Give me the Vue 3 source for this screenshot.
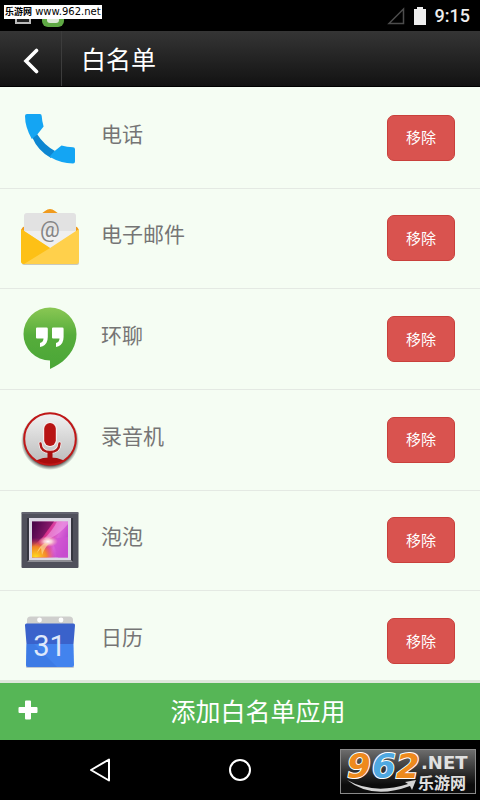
<template>
  <div class="screen">
    <div class="status-bar">
      <div class="notifications">
        <svg width="16" height="18" viewBox="0 0 16 18">
          <rect x="1" y="4" width="14" height="12" fill="#222" stroke="#bbb" stroke-width="2" />
        </svg>
        <svg width="22" height="22" viewBox="0 0 22 22">
          <rect width="22" height="22" rx="6" fill="#5fa944" />
          <rect x="5" y="3" width="12" height="15" rx="3" fill="#dce8d6" />
        </svg>
      </div>
      <div class="system">
        <svg class="signal" width="18" height="18" viewBox="0 0 18 18">
          <path d="M2 16.5H16.5V2Z" fill="none" stroke="#4c4c4c" stroke-width="1.5" />
        </svg>
        <svg class="battery" width="12" height="18" viewBox="0 0 12 18">
          <path d="M3 0H9V2H12V18H0V2H3Z" fill="#eee" />
        </svg>
        <span class="clock">9:15</span>
      </div>
      <div class="site-tag"><span class="site-name">乐游网</span> www.962.net</div>
    </div>

    <header class="header">
      <button type="button" class="back-btn" aria-label="返回">
        <svg width="16" height="26" viewBox="0 0 16 26">
          <path d="M13.5 2.5L3 13L13.5 23.5" fill="none" stroke="#fff" stroke-width="3.6" stroke-linecap="round" />
        </svg>
      </button>
      <h1>白名单</h1>
    </header>

    <main class="content">
      <ul class="app-list">
        <li v-for="app in apps" :key="app.id" class="app-row">
          <svg class="app-icon" viewBox="0 0 60 60">
            <g v-if="app.id === 'phone'">
              <path d="M12 29L17 26Q24 37 35 43L31 50Q18 43 12 29Z" fill="#0d86d1" />
              <path d="M7 6H20Q21.6 6 21.7 8Q22 13 23.6 18.5L17.3 26.5L11.8 31Q5 19 5 8Q5 6 7 6Z" fill="#14a5f3" />
              <path d="M34 43.5L41.5 37.5Q47 39.2 53 39.3Q55 39.4 55 41.3V53.5Q55 55.5 53 55.5Q41 55.5 29.5 48.8Z" fill="#14a5f3" />
            </g>
            <g v-else-if="app.id === 'email'">
              <rect x="2" y="53" width="57" height="4" rx="2" fill="#c9c9bd" />
              <path d="M1 22Q2 19 5 18L25 3Q30 -1 35 3L55 18Q58 19 59 22V40H1Z" fill="#f09a1d" />
              <path d="M4 8Q4 5 7 5H53Q56 5 56 8V42H4Z" fill="#e2e2e2" />
              <path d="M4 23H56V42H4Z" fill="#efefef" />
              <text x="30" y="29" class="at-sign">@</text>
              <path d="M1 21L30 40L59 21V53Q59 56 56 56H4Q1 56 1 53Z" fill="#ffd04b" />
              <path d="M1 21L30 40L4 56Q1 56 1 53Z" fill="#fdc016" />
            </g>
            <g v-else-if="app.id === 'hangouts'">
              <defs>
                <linearGradient id="hangouts-fill" x1="0" y1="0" x2="0" y2="1">
                  <stop offset="0" stop-color="#8ac754" />
                  <stop offset="0.45" stop-color="#56ad3b" />
                  <stop offset="1" stop-color="#4aa637" />
                </linearGradient>
              </defs>
              <path d="M30 -1.5A26.5 26.5 0 0 1 56.5 25C56.5 42 44 54 30 60V51.5A26.5 26.5 0 0 1 30 -1.5Z" fill="url(#hangouts-fill)" />
              <path
                d="M17 18.5H26.5Q27.8 18.5 27.8 19.8V28Q27.8 36.5 20 38V34Q23.5 33 23.5 29.5H17Q16 29.5 16 28.5V19.5Q16 18.5 17 18.5ZM33 18.5H42.3Q43.6 18.5 43.6 19.8V28Q43.6 36.5 36 38V34Q39.5 33 39.5 29.5H33Q32 29.5 32 28.5V19.5Q32 18.5 33 18.5Z"
                fill="#fff"
              />
            </g>
            <g v-else-if="app.id === 'recorder'">
              <defs>
                <linearGradient id="recorder-fill" x1="0" y1="0" x2="0" y2="1">
                  <stop offset="0" stop-color="#f2f2f2" />
                  <stop offset="1" stop-color="#b9b9b9" />
                </linearGradient>
                <radialGradient id="recorder-shadow">
                  <stop offset="0.85" stop-color="#444" stop-opacity="0.9" />
                  <stop offset="1" stop-color="#555" stop-opacity="0" />
                </radialGradient>
                <clipPath id="recorder-clip"><circle cx="30" cy="29" r="26" /></clipPath>
              </defs>
              <circle cx="30" cy="31" r="29" fill="url(#recorder-shadow)" />
              <circle cx="30" cy="29" r="26" fill="url(#recorder-fill)" />
              <ellipse cx="30" cy="56" rx="18" ry="8.5" fill="#a90d0d" clip-path="url(#recorder-clip)" />
              <circle cx="30" cy="29" r="25.8" fill="none" stroke="#c01818" stroke-width="2" />
              <rect x="23" y="12" width="14" height="25" rx="7" fill="#f6eeee" />
              <rect x="24.2" y="13" width="11.6" height="23" rx="5.8" fill="#b81414" />
              <path d="M20.5 33.5Q21 42 30 42Q39 42 39.5 33.5" fill="none" stroke="#f6eeee" stroke-width="4" stroke-linecap="round" />
              <path d="M20.5 33.5Q21 42 30 42Q39 42 39.5 33.5" fill="none" stroke="#b01818" stroke-width="2.4" stroke-linecap="round" />
              <rect x="27.5" y="42" width="5" height="9" fill="#a90d0d" />
            </g>
            <g v-else-if="app.id === 'gallery'">
              <defs>
                <linearGradient id="gallery-fill" x1="0" y1="0.2" x2="1" y2="0.6">
                  <stop offset="0" stop-color="#5b0748" />
                  <stop offset="0.4" stop-color="#d8308c" />
                  <stop offset="0.7" stop-color="#dc66d6" />
                  <stop offset="1" stop-color="#b83fc8" />
                </linearGradient>
                <radialGradient id="gallery-glow" cx="0.1" cy="1" r="0.55">
                  <stop offset="0" stop-color="#ffe21c" />
                  <stop offset="0.55" stop-color="#f7901e" stop-opacity="0.9" />
                  <stop offset="1" stop-color="#e0306c" stop-opacity="0" />
                </radialGradient>
                <radialGradient id="gallery-light">
                  <stop offset="0" stop-color="#fff" />
                  <stop offset="0.4" stop-color="#ffe6dc" stop-opacity="0.8" />
                  <stop offset="1" stop-color="#ffb0b0" stop-opacity="0" />
                </radialGradient>
              </defs>
              <rect x="1.5" y="2" width="57" height="56" rx="1" fill="#50515c" />
              <path d="M1.5 3H58.5" stroke="#777883" stroke-width="1" />
              <path d="M7 8H9V50H51V8H53V52H7Z" fill="#34353f" />
              <rect x="9" y="8" width="42" height="42" fill="#dcd8e4" />
              <path d="M9 50L7 52H53L51 50Z" fill="#8e8e94" />
              <rect x="12" y="11.5" width="36" height="36" fill="url(#gallery-fill)" />
              <path d="M12 11.5H34L22 28L12 37Z" fill="#41064c" opacity="0.55" />
              <path d="M24 29Q33 20 37 11.5H48V14Q40 24 29 29Z" fill="#f0a0e6" opacity="0.6" />
              <path d="M29 29L48 27V47.5H38Q36 36 29 29Z" fill="#cf52d2" opacity="0.7" />
              <rect x="12" y="11.5" width="36" height="36" fill="url(#gallery-glow)" />
              <ellipse cx="28" cy="31.5" rx="10" ry="5.5" fill="url(#gallery-light)" />
              <path d="M29 34Q25 37 22 45L21 38L17 43Q19 36 25 33Z" fill="#ffe9a0" opacity="0.6" />
            </g>
            <g v-else>
              <rect x="6" y="54" width="48" height="3" rx="1" fill="#c3c9d0" />
              <path d="M7 14V9Q7 5.5 10.5 5.5H49.5Q53 5.5 53 9V14Z" fill="#cfcfcd" />
              <circle cx="19.5" cy="9" r="2.4" fill="#fff" />
              <circle cx="41" cy="9" r="2.4" fill="#fff" />
              <path d="M6.5 12.5H53.5Q55.2 12.5 55 14.5L53.5 33H6.5L5 14.5Q4.8 12.5 6.5 12.5Z" fill="#3a62cb" />
              <path d="M6.5 33H53.5L54 54Q54 56 52 56H8Q6 56 6 54Z" fill="#4283ee" />
              <path d="M6.5 33H14L37 56H8Q6 56 6 54Z" fill="#3b76df" opacity="0.6" />
              <text x="29.5" y="44.5" class="day-number">31</text>
            </g>
          </svg>
          <span class="app-name">{{ app.name }}</span>
          <button type="button" class="remove-btn">移除</button>
        </li>
      </ul>
    </main>

    <button type="button" class="add-btn">
      <svg width="20" height="20" viewBox="0 0 20 20">
        <path d="M8 0.5H12Q13 0.5 13 1.5V7H18.5Q19.5 7 19.5 8V12Q19.5 13 18.5 13H13V18.5Q13 19.5 12 19.5H8Q7 19.5 7 18.5V13H1.5Q0.5 13 0.5 12V8Q0.5 7 1.5 7H7V1.5Q7 0.5 8 0.5Z" fill="#fff" />
      </svg>
      <span>添加白名单应用</span>
    </button>

    <nav class="nav-bar">
      <button type="button" aria-label="后退">
        <svg width="24" height="26" viewBox="0 0 24 26">
          <path d="M21 2.5V23.5L3 13Z" fill="none" stroke="#fff" stroke-width="2" stroke-linejoin="round" />
        </svg>
      </button>
      <button type="button" aria-label="主页">
        <svg width="24" height="24" viewBox="0 0 24 24">
          <circle cx="12" cy="12" r="10" fill="none" stroke="#fff" stroke-width="2" />
        </svg>
      </button>
      <button type="button" aria-label="最近任务"></button>
      <svg class="site-logo" width="136" height="46" viewBox="0 0 136 46">
        <defs>
          <linearGradient id="logo-fill" x1="0" y1="0" x2="0" y2="1">
            <stop offset="0" stop-color="#6e6e6e" />
            <stop offset="0.8" stop-color="#0c0c0c" />
          </linearGradient>
        </defs>
        <rect x="0.5" y="0.5" width="135" height="44" fill="url(#logo-fill)" stroke="#8a8a8a" />
        <path d="M7 31Q34 46 68 35L65 33L76 31L72 41L70 37Q32 51 7 31Z" fill="#d4d4d4" />
        <g class="logo-number">
          <text x="7" y="29" fill="#ee8a1d">9</text>
          <text x="32" y="29" fill="#4fa8e0">6</text>
          <text x="56" y="29" fill="#ee8a1d">2</text>
        </g>
        <text x="81" y="20" class="logo-net">.NET</text>
        <text x="78" y="40" class="logo-cn">乐游网</text>
      </svg>
    </nav>
  </div>
</template>

<script setup>
import { ref } from 'vue'

const apps = ref([
  { id: 'phone', name: '电话' },
  { id: 'email', name: '电子邮件' },
  { id: 'hangouts', name: '环聊' },
  { id: 'recorder', name: '录音机' },
  { id: 'gallery', name: '泡泡' },
  { id: 'calendar', name: '日历' }
])
</script>

<style>
body {
  margin: 0;
  background: #000;
}
</style>

<style scoped>
.screen {
  display: flex;
  flex-direction: column;
  height: 100vh;
  font-family: Roboto, "Noto Sans CJK SC", sans-serif;
}

button {
  border: none;
  padding: 0;
  background: none;
  font-family: inherit;
  cursor: pointer;
}

svg {
  display: block;
  flex-shrink: 0;
}

.status-bar {
  position: relative;
  flex-shrink: 0;
  display: flex;
  justify-content: space-between;
  height: 31px;
  background: #000;
}

.notifications {
  display: flex;
  align-items: center;
  gap: 11px;
  padding-left: 15px;
}

.system {
  display: flex;
  align-items: center;
  padding-right: 10px;
}

.battery {
  margin: 0 9px;
}

.clock {
  color: #eee;
  font-size: 18px;
  font-weight: 500;
}

.site-tag {
  position: absolute;
  left: 4px;
  top: 5px;
  height: 14px;
  padding: 0 1px;
  background: #fff;
  color: #000;
  font-family: "DejaVu Sans", "Noto Sans CJK SC", sans-serif;
  font-size: 10px;
  line-height: 14px;
  white-space: nowrap;
}

.site-name {
  font-size: 9px;
  font-weight: bold;
}

.header {
  flex-shrink: 0;
  display: flex;
  box-sizing: border-box;
  height: 56px;
  border-bottom: 1px solid #000;
  background: linear-gradient(#353535, #121212);
}

.back-btn {
  display: flex;
  align-items: center;
  justify-content: center;
  width: 62px;
  padding-top: 4px;
  border-right: 1px solid #3c3c3c;
}

.header h1 {
  margin: 0;
  padding-left: 19px;
  color: #fff;
  font-size: 25px;
  font-weight: 400;
  line-height: 60px;
}

.content {
  flex: 1;
  min-height: 0;
  overflow-y: auto;
  scrollbar-width: none;
  background: #f5fdf3;
}

.app-list {
  display: grid;
  grid-auto-rows: 1fr;
  min-height: 604px;
  margin: 0;
  padding: 1px 0 0;
  list-style: none;
}

.app-row {
  display: flex;
  align-items: center;
  padding: 0 25px 0 20px;
  border-bottom: 1px solid #e4e9e3;
}

.app-icon {
  width: 60px;
  height: 60px;
  overflow: visible;
}

.at-sign {
  fill: #858585;
  font-family: Roboto, sans-serif;
  font-size: 22px;
  text-anchor: middle;
}

.day-number {
  fill: #dfe8fa;
  font-family: Roboto, sans-serif;
  font-size: 29px;
  text-anchor: middle;
}

.app-name {
  flex: 1;
  padding: 0 0 6px 21px;
  color: #757575;
  font-size: 21px;
  line-height: 30px;
}

.remove-btn {
  width: 68px;
  height: 46px;
  padding-bottom: 2px;
  border: 1px solid #c9403b;
  border-radius: 7px;
  background: #d9534f;
  color: #fff;
  font-size: 15px;
}

.add-btn {
  flex-shrink: 0;
  display: flex;
  align-items: center;
  height: 60px;
  padding: 0 18px 4px;
  border-top: 3px solid #dfe8dc;
  background: #56b656;
  color: #fff;
  font-size: 25px;
}

.add-btn span {
  flex: 1;
  padding-left: 16px;
}

.nav-bar {
  position: relative;
  flex-shrink: 0;
  display: flex;
  justify-content: center;
  height: 60px;
  background: #000;
}

.nav-bar button {
  display: flex;
  align-items: center;
  justify-content: center;
  width: 140px;
}

.site-logo {
  position: absolute;
  right: 4px;
  bottom: 5px;
  overflow: visible;
}

.logo-number {
  stroke: #fff;
  stroke-width: 2px;
  paint-order: stroke;
  font-family: "DejaVu Sans", sans-serif;
  font-size: 34px;
  font-style: italic;
  font-weight: bold;
}

.logo-net {
  fill: #e0e0e0;
  font-family: "DejaVu Sans", sans-serif;
  font-size: 18px;
  font-weight: bold;
}

.logo-cn {
  fill: #e0e0e0;
  font-family: "DejaVu Sans", "Noto Sans CJK SC", sans-serif;
  font-size: 16px;
  font-weight: bold;
}
</style>
